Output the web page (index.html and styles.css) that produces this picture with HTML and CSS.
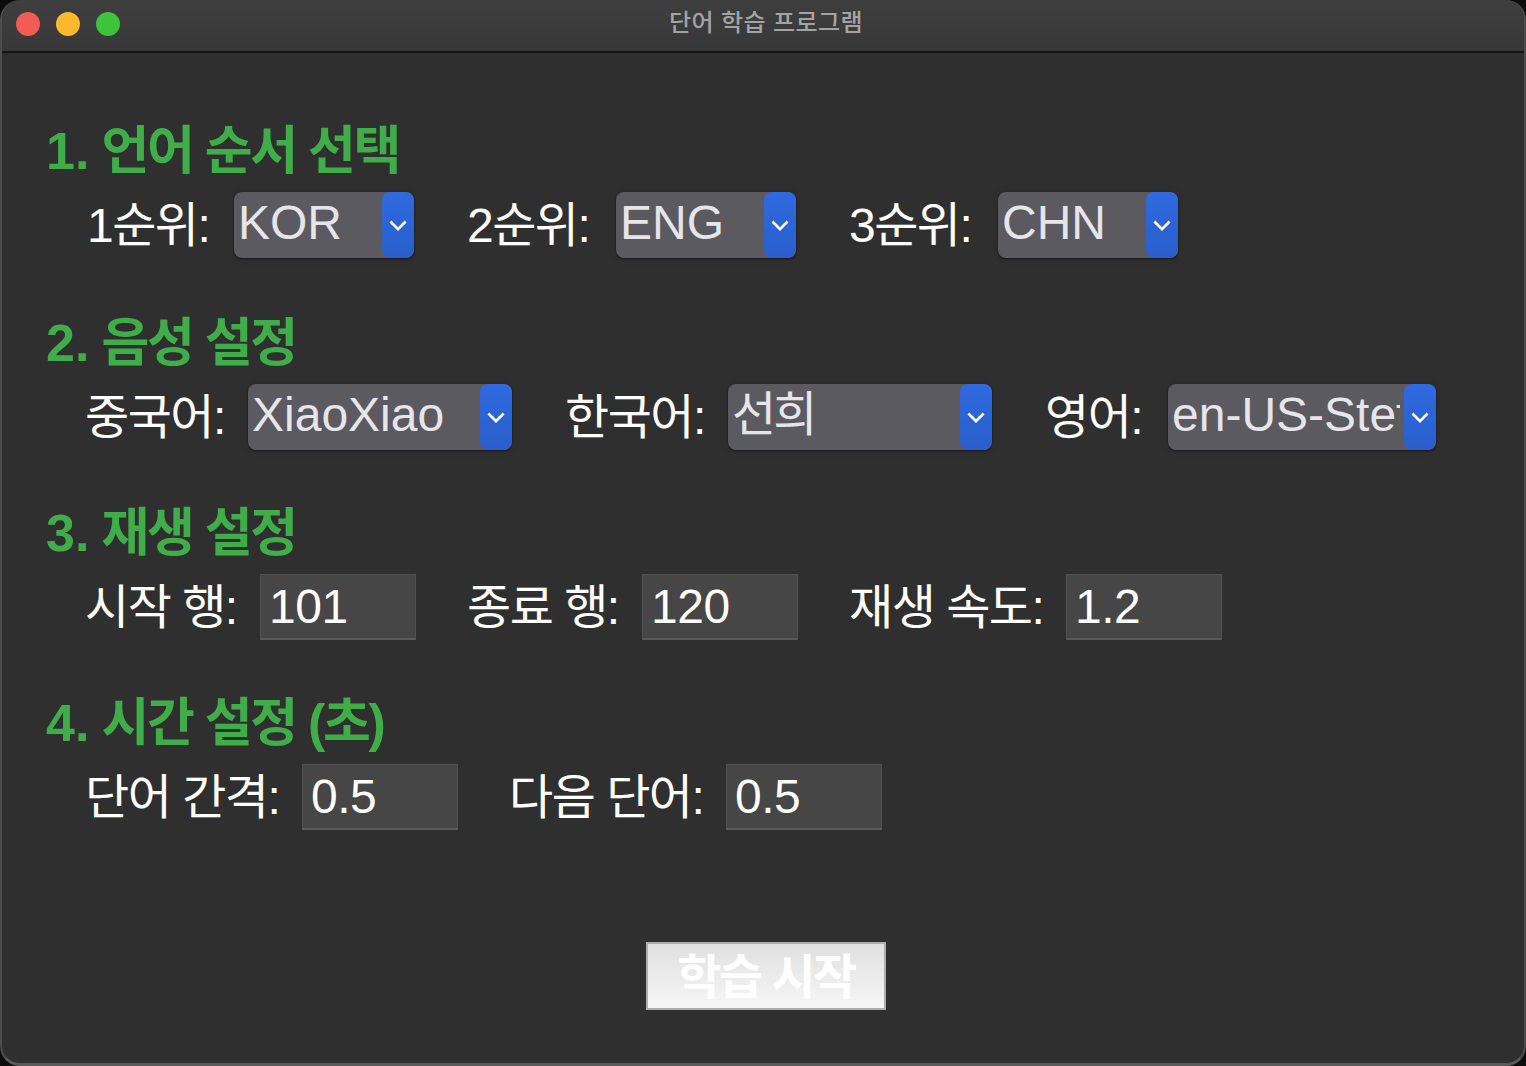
FILE: index.html
```html
<!DOCTYPE html>
<html lang="ko">
<head>
	<meta charset="UTF-8">
	<title>단어 학습 프로그램</title>
	<link rel="stylesheet" href="styles.css">
</head>
<body>
	<div class="window">
		<div class="titlebar">
			<div class="lights">
				<span class="light red"></span>
				<span class="light yellow"></span>
				<span class="light green"></span>
			</div>
			<div class="title">단어 학습 프로그램</div>
		</div>
		<div class="content">
			<section class="group first">
				<h2><span class="num">1.</span> 언어 순서 선택</h2>
				<div class="row order">
					<label class="w146">1순위:</label>
					<div class="select w180"><span class="value">KOR</span><span class="arrow"><svg viewBox="0 0 16 16"><path d="M2.5 5.5l5.5 5.5 5.5-5.5"/></svg></span></div>
					<label class="w148">2순위:</label>
					<div class="select w180"><span class="value">ENG</span><span class="arrow"><svg viewBox="0 0 16 16"><path d="M2.5 5.5l5.5 5.5 5.5-5.5"/></svg></span></div>
					<label class="w148">3순위:</label>
					<div class="select w180"><span class="value">CHN</span><span class="arrow"><svg viewBox="0 0 16 16"><path d="M2.5 5.5l5.5 5.5 5.5-5.5"/></svg></span></div>
				</div>
			</section>
			<section class="group second">
				<h2><span class="num">2.</span> 음성 설정</h2>
				<div class="row">
					<label class="w162">중국어:</label>
					<div class="select w264"><span class="value">XiaoXiao</span><span class="arrow"><svg viewBox="0 0 16 16"><path d="M2.5 5.5l5.5 5.5 5.5-5.5"/></svg></span></div>
					<label class="w162">한국어:</label>
					<div class="select w264"><span class="value ko">선희</span><span class="arrow"><svg viewBox="0 0 16 16"><path d="M2.5 5.5l5.5 5.5 5.5-5.5"/></svg></span></div>
					<label class="w122">영어:</label>
					<div class="select w268"><span class="value">en-US-Steffan</span><span class="arrow"><svg viewBox="0 0 16 16"><path d="M2.5 5.5l5.5 5.5 5.5-5.5"/></svg></span></div>
				</div>
			</section>
			<section class="group">
				<h2><span class="num">3.</span> 재생 설정</h2>
				<div class="row">
					<label class="w174">시작 행:</label>
					<input class="field" type="text" value="101">
					<label class="w174">종료 행:</label>
					<input class="field" type="text" value="120">
					<label class="w216">재생 속도:</label>
					<input class="field" type="text" value="1.2">
				</div>
			</section>
			<section class="group">
				<h2><span class="num">4.</span> 시간 설정 (초)</h2>
				<div class="row">
					<label class="w216">단어 간격:</label>
					<input class="field" type="text" value="0.5">
					<label class="w216">다음 단어:</label>
					<input class="field" type="text" value="0.5">
				</div>
			</section>
			<div class="actions">
				<button class="start" type="button">학습 시작</button>
			</div>
		</div>
	</div>
</body>
</html>
```

FILE: styles.css
```css
*{
	box-sizing: border-box;
}
html,body{
	margin: 0;
	height: 100%;
	background: #0c0c0c;
}
body{
	font-family: "Liberation Sans", "Noto Sans CJK KR", sans-serif;
	overflow: hidden;
}
.window{
	height: 1066px;
	display: flex;
	flex-direction: column;
	background: #2f2f2f;
	border-radius: 20px;
	border-left: 2px solid #4c4c4c;
	border-right: 2px solid #4c4c4c;
	border-bottom: 3px solid #5a5a5a;
	overflow: hidden;
}
.titlebar{
	height: 53px;
	flex: none;
	display: flex;
	align-items: center;
	position: relative;
	background: linear-gradient(#3e3e3e, #383838);
	border-bottom: 2px solid #141414;
	margin-left: -2px;
	margin-right: -2px;
}
.lights{
	display: flex;
	gap: 16px;
	margin-left: 16px;
	margin-top: -3px;
}
.light{
	width: 24px;
	height: 24px;
	border-radius: 50%;
}
.red{
	background: #f25c54;
}
.yellow{
	background: #fdb92c;
}
.green{
	background: #3cc43c;
}
.title{
	position: absolute;
	left: 6px;
	right: 0;
	top: 6px;
	text-align: center;
	font-size: 24px;
	line-height: 34px;
	font-weight: 500;
	letter-spacing: .4px;
	color: #a3a3a3;
}
.content{
	flex: 1;
	padding: 0 0 0 44px;
}
.group{
	margin-top: 53px;
}
.group.first{
	margin-top: 68px;
}
.group.second{
	margin-top: 55px;
}
h2{
	margin: 0;
	height: 60px;
	font-size: 52px;
	line-height: 60px;
	font-weight: 700;
	letter-spacing: -2.3px;
	color: #3fae49;
	white-space: nowrap;
}
h2 .num{
	letter-spacing: 0;
}
.row{
	display: flex;
	align-items: center;
	height: 66px;
	margin-top: 11px;
	padding-left: 40px;
	color: #fff;
	font-size: 48px;
}
.row.order{
	padding-left: 42px;
}
label{
	flex: none;
	white-space: nowrap;
	line-height: 66px;
	padding-top: 2px;
	margin-left: -1px;
	margin-right: 1px;
	letter-spacing: -1.5px;
}
.w122{ width: 122px; }
.w146{ width: 146px; }
.w148{ width: 148px; }
.w162{ width: 162px; }
.w174{ width: 174px; }
.w216{ width: 216px; }
.w180{ width: 180px; }
.w264{ width: 264px; }
.w268{ width: 268px; }
.select{
	flex: none;
	display: flex;
	height: 66px;
	margin-right: 54px;
	background: #5b5a60;
	border-radius: 8px;
	box-shadow: 0 1px 2px rgba(0,0,0,.5), 0 0 8px rgba(0,0,0,.12);
	overflow: hidden;
}
.value{
	flex: 1;
	min-width: 0;
	overflow: hidden;
	white-space: nowrap;
	padding-left: 4px;
	margin-right: 4px;
	color: #e6e5e9;
	line-height: 62px;
}
.value.ko{
	letter-spacing: -3px;
}
.arrow{
	flex: none;
	width: 32px;
	display: flex;
	align-items: center;
	justify-content: center;
	background: linear-gradient(#2f6ae0, #2a5ecb);
	border-radius: 8px;
}
.arrow svg{
	width: 22px;
	height: 22px;
	fill: none;
	stroke: #fff;
	stroke-width: 2;
}
.field{
	flex: none;
	width: 156px;
	height: 66px;
	margin: 0 52px 0 0;
	padding: 0 0 1px 8px;
	background: #464646;
	border: 1px solid #505050;
	border-bottom: 2px solid #5a5a5a;
	border-radius: 0;
	color: #fff;
	font-family: inherit;
	font-size: 48px;
	letter-spacing: -.5px;
	outline: none;
}
.actions{
	display: flex;
	justify-content: center;
	margin: 112px 0 0 -38px;
}
.start{
	width: 240px;
	height: 68px;
	padding: 4px 0 0;
	background: linear-gradient(#e0e0e0, #f6f6f6);
	border: 2px solid #adadad;
	color: #fff;
	font-family: inherit;
	font-size: 48px;
	font-weight: 700;
	letter-spacing: -2.5px;
	line-height: 60px;
}
```
